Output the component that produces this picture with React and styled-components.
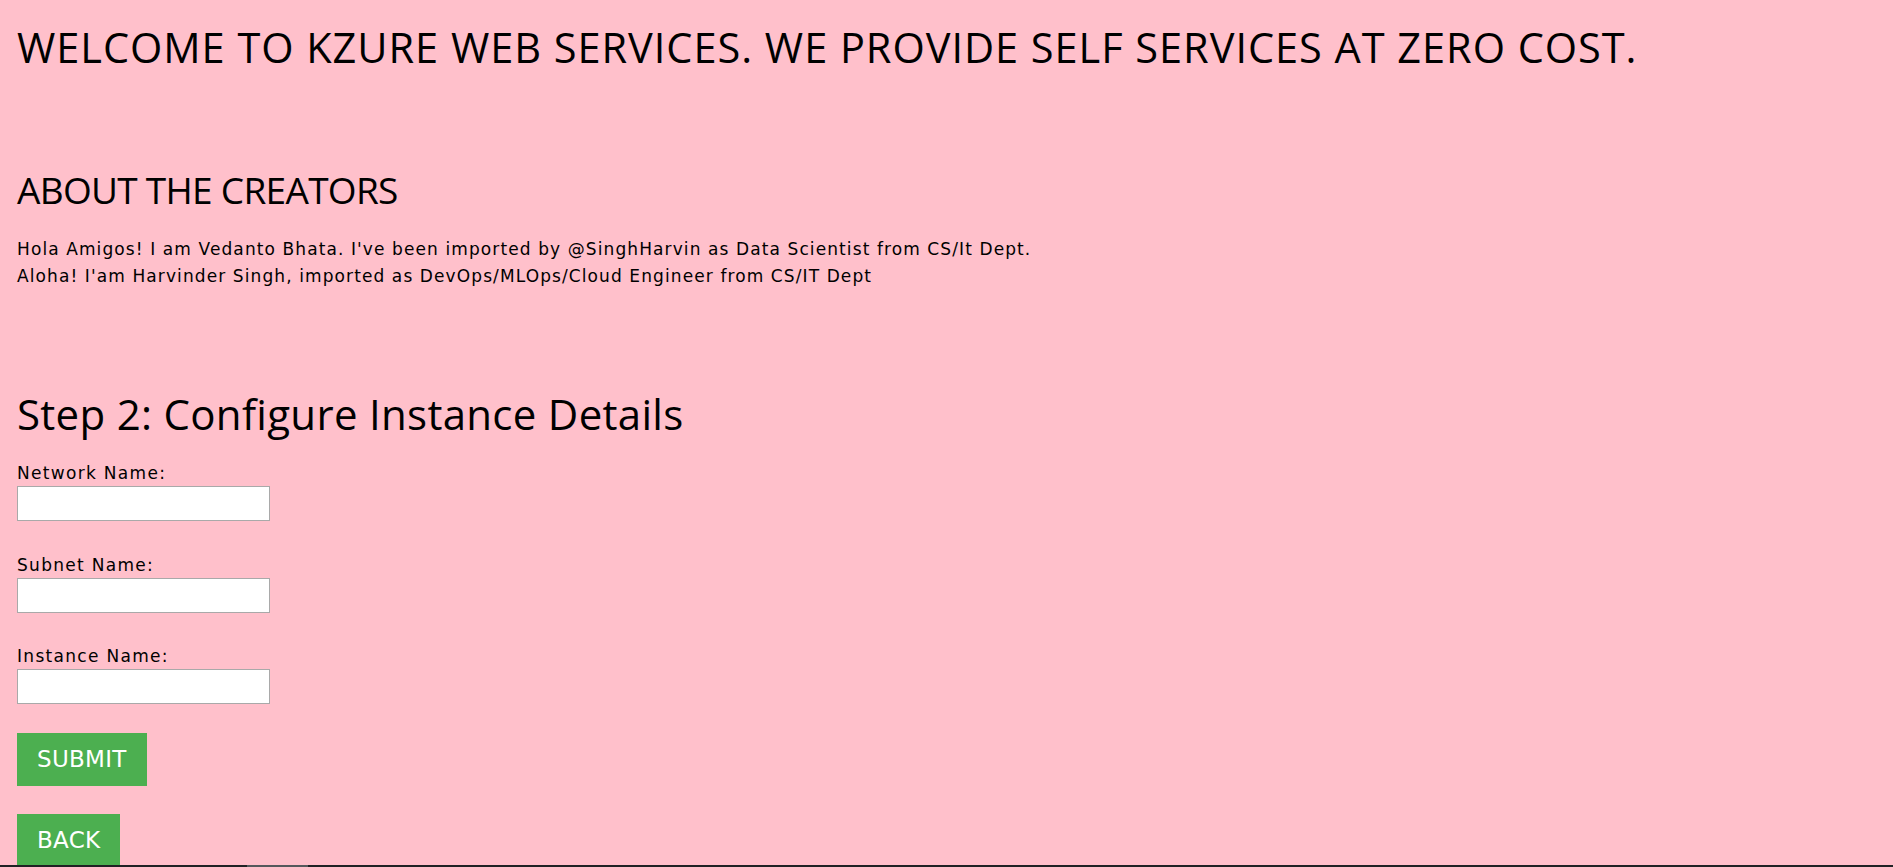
import React from 'react';
import styled, { createGlobalStyle } from 'styled-components';

const GlobalStyle = createGlobalStyle`
  html, body {
    margin: 0;
    padding: 0;
    background-color: #ffc0cb;
    color: #000;
  }
  body {
    font-family: "DejaVu Sans", Verdana, sans-serif;
  }
`;

const Page = styled.div`
  padding: 27px 17px 40px 17px;
`;

const Title = styled.h1`
  margin: 0;
  font-family: "Open Sans", "Noto Sans", sans-serif;
  font-weight: 400;
  font-size: 41.5px;
  line-height: 40px;
  letter-spacing: 0.97px;
`;

const SectionTitle = styled.h2`
  margin: 104px 0 0 0;
  font-family: "Open Sans", "Noto Sans", sans-serif;
  font-weight: 400;
  font-size: 37px;
  line-height: 37px;
  letter-spacing: -0.7px;
`;

const About = styled.p`
  margin: 28px 0 0 0;
  font-size: 17px;
  line-height: 27px;
  letter-spacing: 1.1px;
`;

const StepTitle = styled.h2`
  margin: 103px 0 0 0;
  font-family: "Open Sans", "Noto Sans", sans-serif;
  font-weight: 400;
  font-size: 42px;
  line-height: 42px;
  letter-spacing: 0.3px;
`;

const Form = styled.form`
  display: flex;
  flex-direction: column;
  align-items: flex-start;
  margin-top: 28px;
`;

const Field = styled.div`
  display: flex;
  flex-direction: column;
  gap: 3px;
  margin-bottom: 33.5px;
`;

const Label = styled.label`
  font-size: 17px;
  line-height: 20px;
  letter-spacing: 1.3px;
`;

const Input = styled.input`
  box-sizing: border-box;
  width: 253px;
  height: 35px;
  margin: 0;
  padding: 2px 4px;
  border: 1px solid #a9a9a9;
  border-radius: 0;
  background: #fff;
  font-family: "DejaVu Sans", Verdana, sans-serif;
  font-size: 16px;
`;

const Button = styled.button`
  box-sizing: border-box;
  height: 53px;
  padding: 0 20px;
  margin: ${props => (props.first ? '-5px 0 0 0' : '28px 0 0 0')};
  border: none;
  border-radius: 0;
  background: #4caf50;
  color: #fff;
  font-family: "DejaVu Sans", Verdana, sans-serif;
  font-size: 23px;
  letter-spacing: 0.3px;
  cursor: pointer;
`;

const BottomBar = styled.div`
  position: fixed;
  left: 0;
  right: 0;
  bottom: 0;
  height: 2px;
  background: #202124;
`;

const BarThumb = styled.div`
  margin-left: 247px;
  width: 61px;
  height: 100%;
  background: #55575b;
`;

const fields = ['Network Name:', 'Subnet Name:', 'Instance Name:'];

const App = () => {
  return (
    <Page>
      <GlobalStyle />
      <Title>WELCOME TO KZURE WEB SERVICES. WE PROVIDE SELF SERVICES AT ZERO COST.</Title>
      <SectionTitle>ABOUT THE CREATORS</SectionTitle>
      <About>
        Hola Amigos! I am Vedanto Bhata. I've been imported by @SinghHarvin as Data Scientist from CS/It Dept.
        <br />
        Aloha! I'am Harvinder Singh, imported as DevOps/MLOps/Cloud Engineer from CS/IT Dept
      </About>
      <StepTitle>Step 2: Configure Instance Details</StepTitle>
      <Form onSubmit={e => e.preventDefault()}>
        {fields.map(name => (
          <Field key={name}>
            <Label>{name}</Label>
            <Input type="text" />
          </Field>
        ))}
        <Button type="submit" first>SUBMIT</Button>
        <Button type="button">BACK</Button>
      </Form>
      <BottomBar>
        <BarThumb />
      </BottomBar>
    </Page>
  );
};

export default App;
